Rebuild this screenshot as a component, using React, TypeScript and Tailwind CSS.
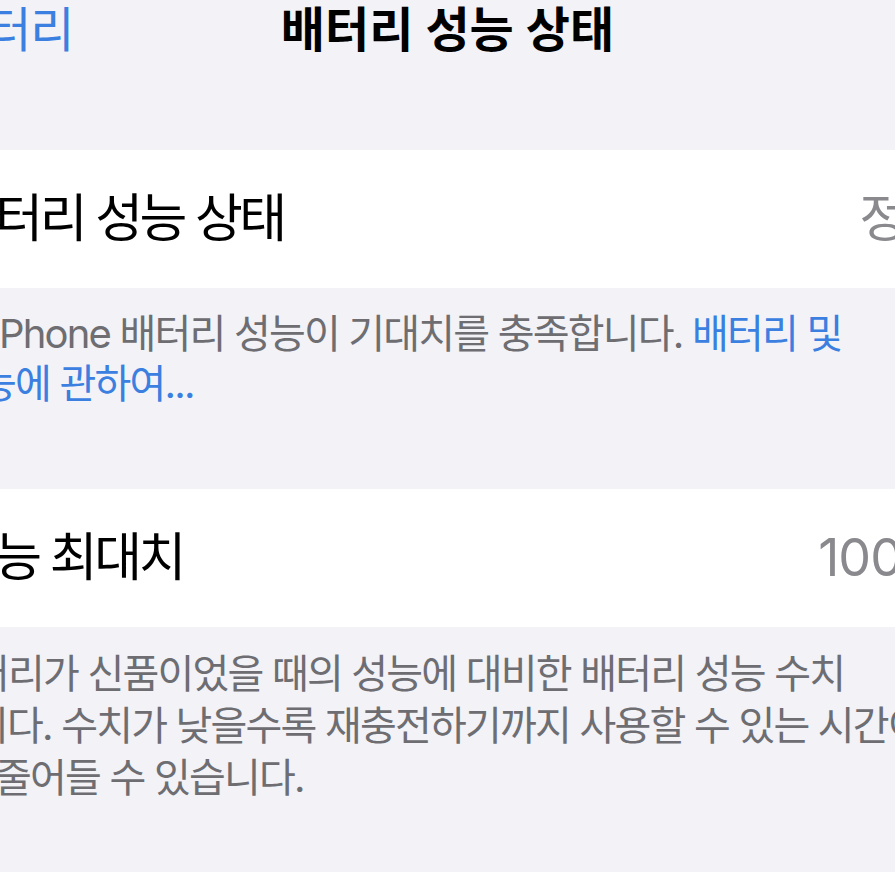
import React from "react";

const FONT = "font-['Inter','Noto_Sans_CJK_KR',sans-serif]";

export default function App() {
  return (
    <div className={`w-[895px] h-[895px] overflow-hidden bg-[#f2f2f7] flex flex-col ${FONT}`}>
      {/* Nav bar */}
      <div className="h-[150px] shrink-0 flex flex-col">
        <div className="h-[60px] flex items-center relative">
          <span className="ml-[-56px] text-[48px] leading-none tracking-[-1px] text-[#3b7fe0] whitespace-nowrap">
            배터리
          </span>
          <span className="absolute left-0 right-0 text-center text-[48px] leading-none font-semibold tracking-[0px] text-black whitespace-nowrap">
            배터리 성능 상태
          </span>
        </div>
      </div>

      {/* Section 1 */}
      <div className="h-[138px] shrink-0 bg-white flex items-center overflow-hidden">
        <span className="ml-[-49px] text-[52px] leading-none tracking-[-3.5px] text-black whitespace-nowrap">
          배터리 성능 상태
        </span>
        <span className="ml-auto mr-[-57px] text-[52px] leading-none tracking-[-1.5px] text-[#8a8a8e] whitespace-nowrap shrink-0">
          정상
        </span>
      </div>

      {/* Footer 1 */}
      <div className="h-[201px] shrink-0 pt-[21px] text-[40px] leading-[50px] tracking-[-1.8px] text-[#6d6d72] overflow-hidden">
        <div className="ml-[-9px] whitespace-nowrap">
          iPhone 배터리 성능이 기대치를 충족합니다.{" "}
          <span className="text-[#3b7fe0]">배터리 및</span>
        </div>
        <div className="ml-[-55px] whitespace-nowrap text-[#3b7fe0]">성능에 관하여...</div>
      </div>

      {/* Section 2 */}
      <div className="h-[138px] shrink-0 bg-white flex items-center overflow-hidden">
        <span className="ml-[-50px] text-[52px] leading-none tracking-[-3.5px] text-black whitespace-nowrap">
          성능 최대치
        </span>
        <span className="ml-auto mr-[-57px] text-[52px] leading-none tracking-[-1px] text-[#8a8a8e] whitespace-nowrap shrink-0">
          100%
        </span>
      </div>

      {/* Footer 2 */}
      <div className="h-[245px] shrink-0 pt-[21px] text-[40px] leading-[52px] tracking-[-1.8px] text-[#6d6d72] overflow-hidden">
        <div className="ml-[-62px] whitespace-nowrap">
          배터리가 신품이었을 때의 성능에 대비한 배터리 성능 수치
        </div>
        <div className="ml-[-63px] whitespace-nowrap">
          입니다. 수치가 낮을수록 재충전하기까지 사용할 수 있는 시간이
        </div>
        <div className="ml-[-5px] whitespace-nowrap">줄어들 수 있습니다.</div>
      </div>

      <div className="flex-1 bg-white" />
    </div>
  );
}
